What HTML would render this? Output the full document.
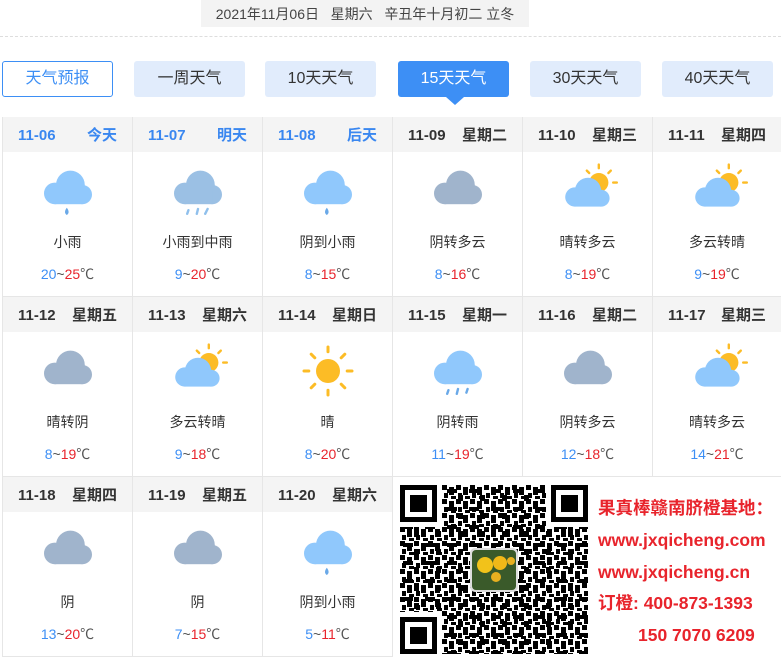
<!DOCTYPE html>
<html><head><meta charset="utf-8"><style>
*{margin:0;padding:0;box-sizing:border-box}
body{width:781px;height:660px;background:#fff;font-family:"Liberation Sans","Noto Sans CJK SC",sans-serif;position:relative;overflow:hidden;color:#333}
.date{position:absolute;left:201px;top:0;width:328px;height:27px;background:#f3f3f3;font-size:14px;color:#444;text-align:center;line-height:28px}
.dash{position:absolute;left:0;top:36px;width:781px;border-top:1px dashed #ddd}
.tab{position:absolute;top:61px;height:36px;width:111px;background:#e1ecfc;border-radius:3px;font-size:16px;line-height:36px;text-align:center;color:#333}
.tab.o{background:#fff;border:1px solid #3d8ff5;color:#3d8ff5;line-height:34px}
.tab.a{background:#3d8ff5;color:#fff}
.tri{position:absolute;left:446px;top:97px;border:9px solid transparent;border-top:8px solid #3d8ff5;border-bottom:0}
.cell{position:absolute;width:130px;height:180px;border-left:1px solid #e6e6e6;border-bottom:1px solid #e6e6e6}
.hd{height:35px;background:#f4f4f4;font-weight:bold;font-size:15px;line-height:37px;padding:0 15px 0 15px;display:flex;justify-content:space-between;color:#333}
.hd.b{color:#3a87f0}
.ic{position:absolute;left:35px;top:44px;width:60px;height:60px}
.w{position:absolute;top:115px;width:100%;text-align:center;font-size:14px;color:#333}
.t{position:absolute;top:147px;width:100%;text-align:center;font-size:14px;color:#555}
.lo{color:#3d8ff5}.hi{color:#e8242c}
.ad{position:absolute;left:598px;font-size:17.5px;line-height:20px;font-weight:bold;color:#e8242c;white-space:nowrap}
</style></head><body>
<svg width="0" height="0" style="position:absolute">
<defs>
<symbol id="cl" viewBox="0 0 50 50"><g><circle cx="27" cy="20" r="12"/><circle cx="14" cy="27" r="9"/><circle cx="37" cy="28" r="8"/><rect x="14" y="25" width="23" height="11"/></g></symbol>
<symbol id="sun" viewBox="0 0 50 50"><g stroke="#fcbc26" stroke-width="2.5" stroke-linecap="round"><line x1="25" y1="5" x2="25" y2="9"/><line x1="25" y1="41" x2="25" y2="45"/><line x1="5" y1="25" x2="9" y2="25"/><line x1="41" y1="25" x2="45" y2="25"/><line x1="11" y1="11" x2="14" y2="14"/><line x1="36" y1="36" x2="39" y2="39"/><line x1="39" y1="11" x2="36" y2="14"/><line x1="11" y1="39" x2="14" y2="36"/></g><circle cx="25" cy="25" r="10" fill="#fcbc26"/></symbol>
<symbol id="ps" viewBox="0 0 50 50"><g stroke="#fcbc26" stroke-width="2" stroke-linecap="round"><line x1="34" y1="3" x2="34" y2="6"/><line x1="24" y1="8" x2="26" y2="10"/><line x1="44" y1="8" x2="42" y2="10"/><line x1="46" y1="18" x2="49" y2="18"/></g><circle cx="34" cy="18" r="8" fill="#fcbc26"/><g fill="#90c8fc"><circle cx="25" cy="25" r="11"/><circle cx="14" cy="30" r="8"/><circle cx="36" cy="31" r="7"/><rect x="14" y="28" width="22" height="10"/></g></symbol>
</defs></svg>

<div class="date">2021年11月06日&nbsp;&nbsp;&nbsp;星期六&nbsp;&nbsp;&nbsp;辛丑年十月初二 立冬</div>
<div class="dash"></div>
<div class="tab o" style="left:2px">天气预报</div>
<div class="tab" style="left:134px">一周天气</div>
<div class="tab" style="left:265px">10天天气</div>
<div class="tab a" style="left:398px">15天天气</div>
<div class="tab" style="left:530px">30天天气</div>
<div class="tab" style="left:662px">40天天气</div>
<div class="tri"></div>

<!-- row 1 -->
<div class="cell" style="left:2px;top:117px"><div class="hd b"><span>11-06</span><span>今天</span></div>
<svg class="ic" viewBox="0 0 50 50"><use href="#cl" fill="#90c8fc"/><path d="M24 39q3 4 0 6q-3-2 0-6z" fill="#6aa9e8"/></svg>
<div class="w">小雨</div><div class="t"><span class="lo">20</span>~<span class="hi">25</span>℃</div></div>
<div class="cell" style="left:132px;top:117px"><div class="hd b"><span>11-07</span><span>明天</span></div>
<svg class="ic" viewBox="0 0 50 50"><use href="#cl" fill="#9bc0e4"/><g stroke="#90c0ec" stroke-width="2" stroke-linecap="round"><line x1="17" y1="41" x2="16" y2="44"/><line x1="25" y1="40" x2="24" y2="44"/><line x1="33" y1="40" x2="31" y2="44"/></g></svg>
<div class="w">小雨到中雨</div><div class="t"><span class="lo">9</span>~<span class="hi">20</span>℃</div></div>
<div class="cell" style="left:262px;top:117px"><div class="hd b"><span>11-08</span><span>后天</span></div>
<svg class="ic" viewBox="0 0 50 50"><use href="#cl" fill="#90c8fc"/><path d="M24 39q3 4 0 6q-3-2 0-6z" fill="#6aa9e8"/></svg>
<div class="w">阴到小雨</div><div class="t"><span class="lo">8</span>~<span class="hi">15</span>℃</div></div>
<div class="cell" style="left:392px;top:117px"><div class="hd"><span>11-09</span><span>星期二</span></div>
<svg class="ic" viewBox="0 0 50 50"><use href="#cl" fill="#a0b4cc"/></svg>
<div class="w">阴转多云</div><div class="t"><span class="lo">8</span>~<span class="hi">16</span>℃</div></div>
<div class="cell" style="left:522px;top:117px"><div class="hd"><span>11-10</span><span>星期三</span></div>
<svg class="ic"><use href="#ps"/></svg>
<div class="w">晴转多云</div><div class="t"><span class="lo">8</span>~<span class="hi">19</span>℃</div></div>
<div class="cell" style="left:652px;top:117px;width:129px"><div class="hd"><span>11-11</span><span>星期四</span></div>
<svg class="ic"><use href="#ps"/></svg>
<div class="w">多云转晴</div><div class="t"><span class="lo">9</span>~<span class="hi">19</span>℃</div></div>

<!-- row 2 -->
<div class="cell" style="left:2px;top:297px"><div class="hd"><span>11-12</span><span>星期五</span></div>
<svg class="ic" viewBox="0 0 50 50"><use href="#cl" fill="#a0b4cc"/></svg>
<div class="w">晴转阴</div><div class="t"><span class="lo">8</span>~<span class="hi">19</span>℃</div></div>
<div class="cell" style="left:132px;top:297px"><div class="hd"><span>11-13</span><span>星期六</span></div>
<svg class="ic"><use href="#ps"/></svg>
<div class="w">多云转晴</div><div class="t"><span class="lo">9</span>~<span class="hi">18</span>℃</div></div>
<div class="cell" style="left:262px;top:297px"><div class="hd"><span>11-14</span><span>星期日</span></div>
<svg class="ic"><use href="#sun"/></svg>
<div class="w">晴</div><div class="t"><span class="lo">8</span>~<span class="hi">20</span>℃</div></div>
<div class="cell" style="left:392px;top:297px"><div class="hd"><span>11-15</span><span>星期一</span></div>
<svg class="ic" viewBox="0 0 50 50"><use href="#cl" fill="#90c8fc"/><g stroke="#6aa9e8" stroke-width="2" stroke-linecap="round"><line x1="17" y1="41" x2="16" y2="44"/><line x1="25" y1="40" x2="24" y2="44"/><line x1="33" y1="40" x2="32" y2="43"/></g></svg>
<div class="w">阴转雨</div><div class="t"><span class="lo">11</span>~<span class="hi">19</span>℃</div></div>
<div class="cell" style="left:522px;top:297px"><div class="hd"><span>11-16</span><span>星期二</span></div>
<svg class="ic" viewBox="0 0 50 50"><use href="#cl" fill="#a0b4cc"/></svg>
<div class="w">阴转多云</div><div class="t"><span class="lo">12</span>~<span class="hi">18</span>℃</div></div>
<div class="cell" style="left:652px;top:297px;width:129px"><div class="hd"><span>11-17</span><span>星期三</span></div>
<svg class="ic"><use href="#ps"/></svg>
<div class="w">晴转多云</div><div class="t"><span class="lo">14</span>~<span class="hi">21</span>℃</div></div>

<!-- row 3 -->
<div class="cell" style="left:2px;top:477px"><div class="hd"><span>11-18</span><span>星期四</span></div>
<svg class="ic" viewBox="0 0 50 50"><use href="#cl" fill="#a0b4cc"/></svg>
<div class="w">阴</div><div class="t"><span class="lo">13</span>~<span class="hi">20</span>℃</div></div>
<div class="cell" style="left:132px;top:477px"><div class="hd"><span>11-19</span><span>星期五</span></div>
<svg class="ic" viewBox="0 0 50 50"><use href="#cl" fill="#a0b4cc"/></svg>
<div class="w">阴</div><div class="t"><span class="lo">7</span>~<span class="hi">15</span>℃</div></div>
<div class="cell" style="left:262px;top:477px"><div class="hd"><span>11-20</span><span>星期六</span></div>
<svg class="ic" viewBox="0 0 50 50"><use href="#cl" fill="#90c8fc"/><path d="M24 39q3 4 0 6q-3-2 0-6z" fill="#6aa9e8"/></svg>
<div class="w">阴到小雨</div><div class="t"><span class="lo">5</span>~<span class="hi">11</span>℃</div></div>
<div style="position:absolute;left:392px;top:477px;width:1px;height:180px;background:#e6e6e6"></div>

<!-- QR -->
<svg style="position:absolute;left:400px;top:485px" width="188" height="169" viewBox="0 0 188 169">
<defs><pattern id="qp" width="14" height="14" patternUnits="userSpaceOnUse">
<rect x="0" y="0" width="5" height="5"/><rect x="7" y="2" width="5" height="8"/><rect x="2" y="8" width="4" height="5"/><rect x="9" y="11" width="5" height="3"/></pattern>
<pattern id="qp2" width="22" height="18" patternUnits="userSpaceOnUse">
<rect x="3" y="4" width="10" height="4"/><rect x="14" y="10" width="5" height="6"/></pattern></defs>
<rect width="188" height="169" fill="url(#qp)"/>
<rect width="188" height="169" fill="url(#qp2)"/>
<g><rect x="0" y="0" width="42" height="42" fill="#fff"/><rect x="0" y="0" width="37" height="37"/><rect x="5" y="5" width="27" height="27" fill="#fff"/><rect x="10" y="10" width="17" height="17"/>
<rect x="146" y="0" width="42" height="42" fill="#fff"/><rect x="151" y="0" width="37" height="37"/><rect x="156" y="5" width="27" height="27" fill="#fff"/><rect x="161" y="10" width="17" height="17"/>
<rect x="0" y="127" width="42" height="42" fill="#fff"/><rect x="0" y="132" width="37" height="37"/><rect x="5" y="137" width="27" height="27" fill="#fff"/><rect x="10" y="142" width="17" height="17"/></g>
<rect x="70" y="63" width="48" height="44" rx="5" fill="#ddd"/>
<rect x="72" y="65" width="44" height="40" rx="4" fill="#3a5a2a"/>
<circle cx="85" cy="80" r="8" fill="#f2c21a"/><circle cx="100" cy="78" r="7" fill="#f0b818"/><circle cx="96" cy="92" r="5" fill="#e8b020"/><circle cx="111" cy="76" r="4" fill="#e8b020"/>
</svg>
<div class="ad" style="top:498px">果真棒赣南脐橙基地：</div>
<div class="ad" style="top:530px">www.jxqicheng.com</div>
<div class="ad" style="top:562px">www.jxqicheng.cn</div>
<div class="ad" style="top:593px">订橙: 400-873-1393</div>
<div class="ad" style="top:625px;left:638px">150 7070 6209</div>
</body></html>
